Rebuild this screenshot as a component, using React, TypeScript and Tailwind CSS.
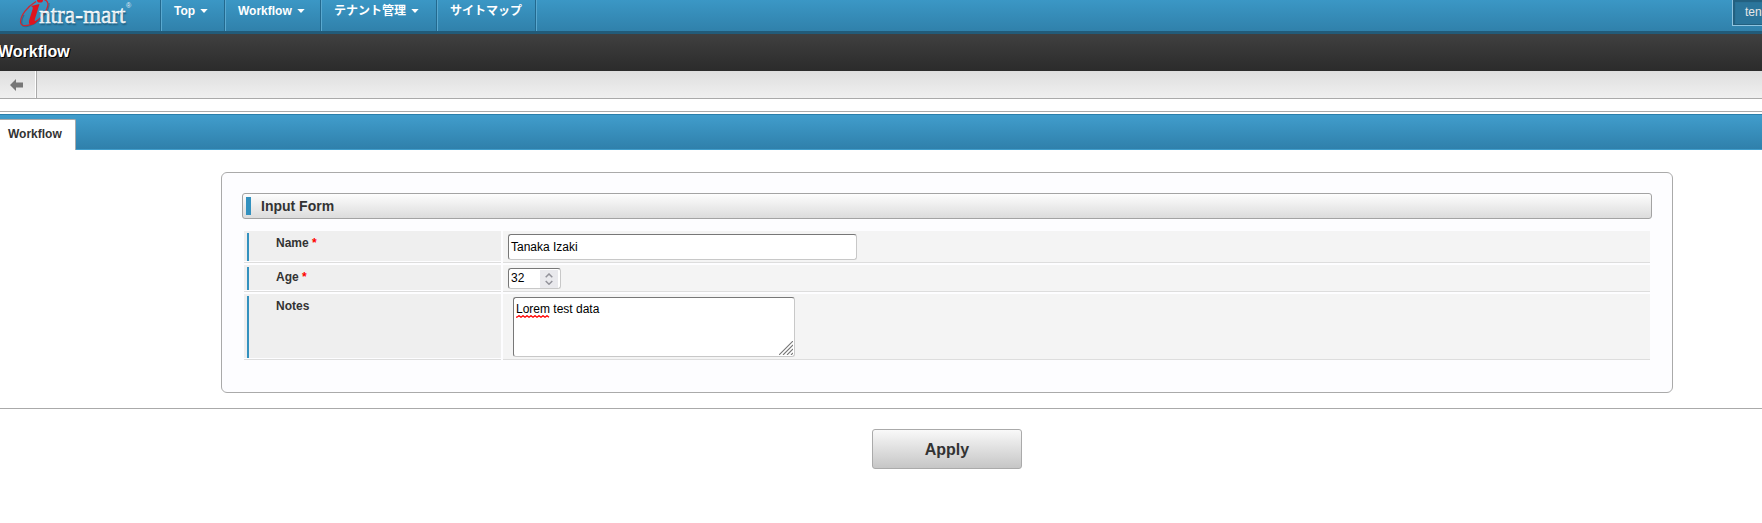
import type { ReactNode } from "react";

const pageFont = "font-['Liberation_Sans','Noto_Sans_CJK_JP',sans-serif]";

function Caret() {
  return (
    <svg className="ml-[5px] h-[4px] w-[8px]" viewBox="0 0 8 4" fill="#fff">
      <path d="M.3 0h7.400L4 4z" />
    </svg>
  );
}

function Logo() {
  return (
    <svg className="block h-[31px] w-[160px] shrink-0" viewBox="0 0 160 31">
      <path d="M49 3C50 11 38 25 26 26.500C20 26.500 21 20 24 15" fill="none" stroke="#1f5775" strokeWidth="1.400" opacity=".5" />
      <path d="M44 -.5C53 2 45 15 36 21.500C28 27 20 27 20.500 21.500C21 15 27 7 36 1.500" fill="none" stroke="#cf2630" strokeWidth="1.200" />
      <path d="M31 6L39.500 4L34.800 19.500Q34.200 22.300 37.500 20Q35.500 24.800 31.500 24.800Q28 24.500 29.200 20L32.800 8.500Q33.200 6.500 31 6Z" fill="#e0141e" />
      <ellipse cx="40" cy="0" rx="3" ry="2.600" fill="#e0141e" />
      <text
        className="[text-shadow:1px_2px_1px_#1f577599]"
        x="39"
        y="22.500"
        fontSize="26"
        fontFamily="Liberation Serif, serif"
        fill="#fff"
        stroke="#fff"
        strokeWidth=".4"
        textLength="86.500"
        lengthAdjust="spacingAndGlyphs"
      >
        ntra-mart
      </text>
      <text x="126" y="8" fontSize="7" fill="#e3eff6" fontFamily="Liberation Sans, sans-serif">®</text>
    </svg>
  );
}

function NavItem({ width, children, caret = true }: { width: string; children: ReactNode; caret?: boolean }) {
  return (
    <li className={`${width} flex h-[31px] shrink-0 border-r border-r-[#23698e] shadow-[1px_0_0_#5aa9d0] pl-[13px] text-[12px] font-bold text-white`}>
      <span className="flex h-[21px] items-center whitespace-nowrap leading-[20px]">
        {children}
        {caret && <Caret />}
      </span>
    </li>
  );
}

function Row({ label, required, height, children }: { label: string; required?: boolean; height: string; children: ReactNode }) {
  return (
    <div className={`${height} grid grid-cols-[257px_1fr] gap-[2px]`}>
      <div className="flex border-b border-[#ddd]">
        <div className="mb-px flex flex-1 bg-[#efefef] pl-[3px] pt-[2px]">
          <div className="w-[2px] bg-[#3391bf]" />
          <label className="pl-[27px] text-[12px] font-bold leading-[20px] text-[#333]">
            {label}
            {required && <span className="text-[#f00]"> *</span>}
          </label>
        </div>
      </div>
      <div className="border-b border-[#ddd] bg-[#f4f4f4] pl-[5px] pt-[3px]">{children}</div>
    </div>
  );
}

const field = "rounded-[3px] border border-[#c8c8c8] border-l-[#777] border-t-[#777] bg-white text-[12px] text-black";

export default function App() {
  return (
    <div className={`${pageFont} h-[523px] w-full overflow-hidden bg-white`}>
      <header className="flex h-[34px] border-b-[3px] border-[#225b79] bg-linear-to-b from-[#3b97c5] to-[#3081ab]">
        <Logo />
        <ul className="flex border-l border-[#23698e] shadow-[inset_1px_0_0_#5aa9d0]">
          <NavItem width="w-[64px]">Top</NavItem>
          <NavItem width="w-[96px]">Workflow</NavItem>
          <NavItem width="w-[116px]">テナント管理</NavItem>
          <NavItem width="w-[99px]" caret={false}>サイトマップ</NavItem>
        </ul>
        <div className="ml-auto h-[26px] w-[30px] overflow-hidden border-b border-l border-b-[#8fc4e0] border-l-[#8fc4e0]">
          <div className="h-[25px] border-b border-l border-t border-[#23607f] bg-[#2b759b] pl-[11px] text-[12px] leading-[22px] text-[#e8e8e8] shadow-[inset_1px_1px_1px_#23607f]">
            tenant
          </div>
        </div>
      </header>
      <h1 className="h-[37px] bg-linear-to-b from-[#404040] to-[#2b2b2b] text-[16px] font-bold leading-[35px] text-white [text-shadow:1px_1px_0_#000]">
        <span className="-ml-[2px]">Workflow</span>
      </h1>
      <div className="flex h-[28px] border-b border-[#aaa] bg-linear-to-b from-[#dedede] to-[#f0f0f0]">
        <div className="flex w-[37px] items-center border-r border-[#aaa] pl-[10px] shadow-[inset_-1px_0_0_#fff]">
          <svg className="h-[12px] w-[13px]" viewBox="0 0 13 12" fill="#777">
            <path d="M0 6L6 0V3.500H13V8.500H6V12Z" />
          </svg>
        </div>
      </div>
      <div className="mb-[2px] h-[13px] border-b border-[#aaa]" />
      <div className="flex h-[36px] items-end border-b border-t border-b-[#419dcb] border-t-[#2b7fab] bg-linear-to-b from-[#419dcc] to-[#2f80ab]">
        <div className="-mb-px h-[31px] w-[76px] rounded-tr-[2px] border-r border-t border-[#aaa] bg-white pl-[8px] text-[12px] font-bold leading-[29px] text-[#333]">
          Workflow
        </div>
      </div>
      <main className="ml-[221px] mt-[22px] h-[221px] w-[1452px] rounded-[6px] border border-[#aaa] bg-[#fdfdff] px-[20px] pt-[20px]">
        <h2 className="flex h-[26px] items-center rounded-[3px] border border-[#a3a3a3] bg-linear-to-b from-[#fdfdfd] to-[#dcdcdc] pl-[3px] text-[14px] font-bold text-[#333]">
          <span className="mr-[10px] h-[18px] w-[5px] bg-[#3391bf]" />
          Input Form
        </h2>
        <div className="mx-[2px] mt-[12px] flex flex-col gap-[2px]">
          <Row label="Name" required height="h-[32px]">
            <div className={`${field} h-[26px] w-[349px] pl-[2px] leading-[24px]`}>Tanaka Izaki</div>
          </Row>
          <Row label="Age" required height="h-[27px]">
            <div className={`${field} flex h-[21px] w-[53px] pl-[2px] leading-[19px]`}>
              32
              <span className="ml-auto mr-[2px] mt-px flex h-[18px] w-[18px] items-center justify-center bg-[#e9e9ed]">
                <svg className="h-[12px] w-[8px]" viewBox="0 0 8 12" fill="none" stroke="#92929a" strokeWidth="1.500">
                  <path d="M.7 4.300L4 1L7.300 4.300M.7 8L4 11.200L7.300 8" />
                </svg>
              </span>
            </div>
          </Row>
          <Row label="Notes" height="h-[66px]">
            <div className={`${field} ml-[5px] flex h-[60px] w-[282px] items-start justify-between pl-[2px]`}>
              <div className="flex pt-[4px] leading-[14px]">
                <span className="flex flex-col">
                  Lorem
                  <svg className="-mt-px h-[3px] w-[34px]" viewBox="0 0 34 3" fill="none" stroke="#f00" strokeWidth="1.300">
                    <path d="M0 2.200L1 2.200L3 .7L5 2.200L7 .7L9 2.200L11 .7L13 2.200L15 .7L17 2.200L19 .7L21 2.200L23 .7L25 2.200L27 .7L29 2.200L31 .7L33 2.200" />
                  </svg>
                </span>
                <span className="whitespace-pre"> test data</span>
              </div>
              <svg className="mb-px mr-px h-[14px] w-[14px] self-end" viewBox="0 0 14 14" stroke="#777" strokeWidth="1.100">
                <path d="M0 14L14 0M4 14L14 4M8 14L14 8M12 14L14 12" />
              </svg>
            </div>
          </Row>
        </div>
      </main>
      <footer className="mt-[15px] flex justify-center border-t border-[#aaa] pl-[132px] pt-[20px]">
        <button className="h-[40px] w-[150px] rounded-[3px] border border-[#aaa] bg-linear-to-b from-[#f9f9f9] to-[#c6c6c6] pt-px text-[16px] font-bold text-[#333]">
          Apply
        </button>
      </footer>
    </div>
  );
}
